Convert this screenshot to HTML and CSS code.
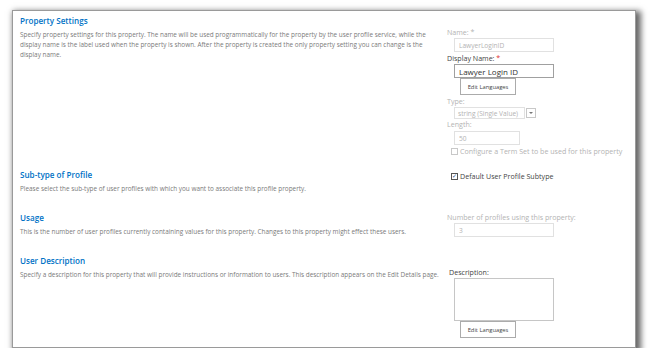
FILE: index.html
```html
<!DOCTYPE html>
<html lang="en">
<head>
<meta charset="UTF-8">
<title>Edit User Profile Property</title>
<link rel="stylesheet" href="styles.css">
</head>
<body>
    <div class="frame">
        <section class="row row-settings">
            <div class="info">
                <h2>Property Settings</h2>
                <p>Specify property settings for this property. The name will be used programmatically for the property by the user profile service, while the display name is the label used when the property is shown. After the property is created the only property setting you can change is the display name.</p>
            </div>
            <div class="fields">
                <div class="lbl dim">Name: *</div>
                <input class="box dim" type="text" value="LawyerLoginID" disabled>
                <div class="lbl">Display Name: <span class="req">*</span></div>
                <input class="box main" type="text" value="Lawyer Login ID">
                <button class="btn">Edit Languages</button>
                <div class="lbl dim gap">Type:</div>
                <div class="select">
                    <span class="select-text">string (Single Value)</span>
                    <span class="select-arrow"></span>
                </div>
                <div class="lbl dim">Length:</div>
                <input class="box dim short" type="text" value="50" disabled>
                <div class="check dim">
                    <span class="cb"></span>
                    Configure a Term Set to be used for this property
                </div>
            </div>
        </section>

        <section class="row row-subtype">
            <div class="info">
                <h2>Sub-type of Profile</h2>
                <p>Please select the sub-type of user profiles with which you want to associate this profile property.</p>
            </div>
            <div class="fields">
                <div class="check">
                    <span class="cb on">&#10003;</span>
                    Default User Profile Subtype
                </div>
            </div>
        </section>

        <section class="row row-usage">
            <div class="info">
                <h2>Usage</h2>
                <p>This is the number of user profiles currently containing values for this property. Changes to this property might effect these users.</p>
            </div>
            <div class="fields">
                <div class="lbl dim">Number of profiles using this property:</div>
                <input class="box dim" type="text" value="3" disabled>
            </div>
        </section>

        <section class="row row-desc">
            <div class="info">
                <h2>User Description</h2>
                <p>Specify a description for this property that will provide instructions or information to users. This description appears on the Edit Details page.</p>
            </div>
            <div class="fields">
                <div class="lbl indent">Description:</div>
                <textarea class="area"></textarea>
                <button class="btn">Edit Languages</button>
            </div>
        </section>
    </div>
</body>
</html>
```

FILE: styles.css
```css
/* Page */
body {
    margin: 0;
    background-color: #fff;
    font-family: "Open Sans", Arial, sans-serif;
}

/* The white sheet with its drop shadow */
.frame {
    margin: 10px 14px 0 12px;
    height: 338px;
    box-sizing: border-box;
    border: 1px solid #9a9a9a;
    background-color: #fff;
    box-shadow: 3px 3px 6px 2px rgba(0, 0, 0, 0.6);
}

/* One section: text on the left, controls on the right */
.row {
    display: grid;
    grid-template-columns: 427px 1fr;
    padding-left: 7px;
}

.info h2 {
    margin: 0;
    font-size: 8.1px;
    line-height: 12px;
    font-weight: 600;
    color: #0072c6;
}

.info p {
    margin: 3px 0 0;
    padding-right: 4px;
    font-size: 6.4px;
    line-height: 10px;
    color: #7a7a7a;
}

.fields {
    display: flex;
    flex-direction: column;
    align-items: flex-start;
}

.row-settings {
    padding-top: 4px;
    height: 154px;
}

.row-settings .fields {
    padding-top: 12px;
}

.row-subtype {
    height: 43px;
}

.row-subtype .fields {
    padding-top: 2px;
}

.row-usage {
    height: 43px;
}

.row-desc .fields {
    padding-top: 12px;
}

/* Labels */
.lbl {
    font-size: 7.1px;
    line-height: 10px;
    color: #444;
}

.lbl.dim {
    color: #b3b3b3;
}

.lbl.gap {
    margin-top: 1px;
}

.lbl.indent {
    margin-left: 2px;
}

.req {
    color: #e03030;
}

/* Text boxes */
.box {
    margin: 1px 0 1px 7px;
    width: 100px;
    height: 14px;
    box-sizing: border-box;
    padding: 0 0 0 4px;
    border: 1px solid #e1e1e1;
    background-color: #fff;
    font-family: "Open Sans", Arial, sans-serif;
    font-size: 6.6px;
    color: #b3b3b3;
    outline: none;
}

.box.main {
    margin-bottom: 0;
    border-color: #a0a0a0;
    font-size: 8px;
    color: #333;
}

.box.short {
    width: 66px;
    margin-top: 2px;
}

.btn {
    margin-left: 13px;
    width: 56px;
    height: 17px;
    padding: 0;
    border: 1px solid #ababab;
    background-color: #fff;
    font-family: "Open Sans", Arial, sans-serif;
    font-size: 5.8px;
    color: #444;
}

/* Disabled drop-down */
.select {
    display: flex;
    align-items: center;
    margin: 1px 0 0 7px;
    height: 12px;
}

.select-text {
    display: flex;
    align-items: center;
    width: 71px;
    height: 12px;
    box-sizing: border-box;
    padding-left: 3px;
    border: 1px solid #e1e1e1;
    font-size: 6.6px;
    color: #b3b3b3;
}

.select-arrow {
    position: relative;
    width: 10px;
    height: 10px;
    margin-left: 1px;
    box-sizing: border-box;
    border: 1px solid #c8c8c8;
}

.select-arrow::after {
    content: "";
    position: absolute;
    left: 2px;
    top: 3px;
    border-left: 2px solid transparent;
    border-right: 2px solid transparent;
    border-top: 2px solid #777;
}

/* Check boxes */
.check {
    display: flex;
    align-items: center;
    gap: 2px;
    margin-left: 4px;
    font-size: 7.1px;
    line-height: 10px;
    color: #444;
}

.check.dim {
    color: #b3b3b3;
}

.cb {
    display: inline-flex;
    align-items: center;
    justify-content: center;
    width: 7px;
    height: 7px;
    box-sizing: border-box;
    border: 1px solid #c8c8c8;
    font-size: 6px;
    line-height: 1;
    color: #1f4f8f;
}

.cb.on {
    border-color: #555;
}

/* Description box */
.area {
    margin: 1px 0 0 7px;
    width: 100px;
    height: 43px;
    box-sizing: border-box;
    border: 1px solid #c6c6c6;
    resize: none;
}
```
